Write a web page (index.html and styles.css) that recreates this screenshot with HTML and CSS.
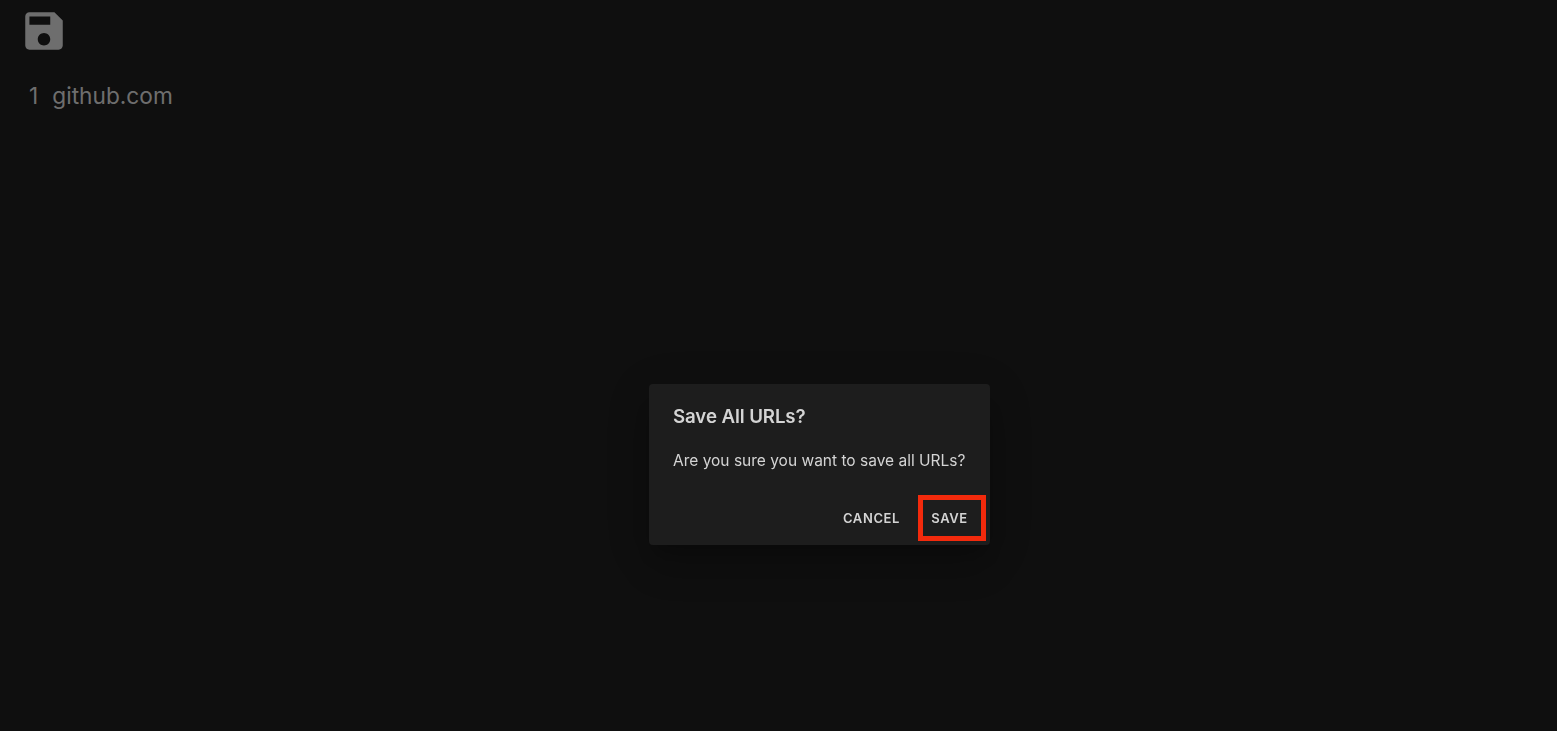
FILE: index.html
```html
<!DOCTYPE html>
<html lang="en">
<head>
  <meta charset="UTF-8" />
  <meta name="viewport" content="width=device-width, initial-scale=1.0"/>
  <title>Save All URLs</title>
  <link rel="stylesheet" href="styles.css">
</head>
<body>
  <div class="page">
    <button type="button" class="save-all" aria-label="Save all">
      <svg viewBox="0 0 24 24" width="50" height="50" fill="currentColor">
        <path d="M17 3H5c-1.11 0-2 .9-2 2v14c0 1.1.89 2 2 2h14c1.1 0 2-.9 2-2V7l-4-4zm-5 16c-1.66 0-3-1.34-3-3s1.34-3 3-3 3 1.34 3 3-1.34 3-3 3zm3-10H5V5h10v4z"/>
      </svg>
    </button>
    <ol class="url-list">
      <li><span class="num">1</span><span>github.com</span></li>
    </ol>
  </div>

  <div class="backdrop"></div>

  <div class="dialog">
    <h2>Save All URLs?</h2>
    <p>Are you sure you want to save all URLs?</p>
    <div class="actions">
      <button type="button" class="btn">CANCEL</button>
      <button type="button" class="btn btn-save">SAVE</button>
    </div>
  </div>
</body>
</html>
```

FILE: styles.css
```css
* {
  box-sizing: border-box;
}
body {
  font-family: Inter, "Liberation Sans", sans-serif;
  background: #1e1e1e;
  color: #dcdcdc;
  margin: 0;
  height: 100vh;
  overflow: hidden;
}
.page {
  padding: 6px 0 0 19px;
}
.save-all {
  display: block;
  padding: 0;
  background: none;
  border: none;
  color: #dcdcdc;
}
.save-all svg {
  display: block;
}
.url-list {
  list-style: none;
  margin: 25px 0 0;
  padding: 0 0 0 10px;
}
.url-list li {
  display: flex;
  gap: 14px;
  font-size: 22.7px;
  line-height: 30px;
}
.backdrop {
  position: fixed;
  top: 0;
  right: 0;
  bottom: 0;
  left: 0;
  background: rgba(0,0,0,0.5);
}
.dialog {
  position: fixed;
  left: 649px;
  top: 384px;
  width: 341px;
  height: 161px;
  background: #1d1d1d;
  border-radius: 4px;
  box-shadow: 0 11px 15px -7px rgba(0,0,0,0.2), 0 24px 38px 3px rgba(0,0,0,0.14), 0 9px 46px 8px rgba(0,0,0,0.12);
  padding: 21px 4px 0 24px;
}
.dialog h2 {
  margin: 0;
  font-size: 18.7px;
  font-weight: 600;
  letter-spacing: -0.1px;
  line-height: 24px;
  color: #d4d4d4;
}
.dialog p {
  margin: 22px 0 0;
  font-size: 15.5px;
  line-height: 20px;
  color: #d4d4d4;
}
.actions {
  display: flex;
  justify-content: flex-end;
  align-items: center;
  gap: 1px;
  margin-top: 24px;
}
.btn {
  font-family: inherit;
  font-size: 13px;
  font-weight: 600;
  letter-spacing: 0.6px;
  color: #d4d4d4;
  background: none;
  border: none;
  padding: 0 17px 0 16px;
  height: 46px;
}
.btn-save {
  width: 68px;
  padding: 0 5px 0 0;
  border: 5px solid #f32a0c;
}
```
